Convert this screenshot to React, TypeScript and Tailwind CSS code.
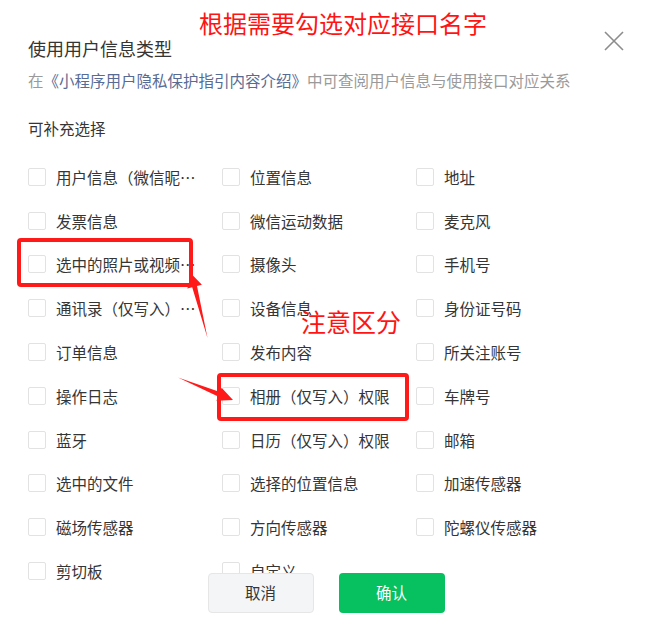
import React from 'react';

const items: string[] = [
  '用户信息（微信昵称、头像）', '位置信息', '地址',
  '发票信息', '微信运动数据', '麦克风',
  '选中的照片或视频信息', '摄像头', '手机号',
  '通讯录（仅写入）权限', '设备信息', '身份证号码',
  '订单信息', '发布内容', '所关注账号',
  '操作日志', '相册（仅写入）权限', '车牌号',
  '蓝牙', '日历（仅写入）权限', '邮箱',
  '选中的文件', '选择的位置信息', '加速传感器',
  '磁场传感器', '方向传感器', '陀螺仪传感器',
  '剪切板', '自定义',
];

const CheckItem: React.FC<{ label: string }> = ({ label }) => (
  <label className="flex h-[43.8px] min-w-0 items-center gap-[10px]">
    <span className="h-[18px] w-[18px] shrink-0 rounded-[2px] border border-[#e2e2e2] bg-white" />
    <span className="max-w-[152px] truncate text-[15.5px] leading-[22px] text-[#353535]">{label}</span>
  </label>
);

export default function App() {
  return (
    <div className="relative h-[634px] w-[652px] overflow-hidden bg-white font-['Noto_Sans_CJK_SC',sans-serif]">
      {/* Dialog body */}
      <div className="pl-[28px] pr-[28px] pt-[31px]">
        <div className="flex items-start justify-between">
          <h1 className="mt-[5px] text-[18px] leading-[25px] text-[#353535]">使用用户信息类型</h1>
          <button className="h-[20px] w-[20px]">
            <svg viewBox="0 0 20 20" className="h-[20px] w-[20px]">
              <path d="M1 1 L19 19 M19 1 L1 19" stroke="#8c8c8c" strokeWidth="1.6" fill="none" />
            </svg>
          </button>
        </div>
        <p className="mt-[8px] text-[15.5px] leading-[22px] text-[#9a9a9a]">
          在<span className="text-[#576b95]">《小程序用户隐私保护指引内容介绍》</span>中可查阅用户信息与使用接口对应关系
        </p>
        <p className="mt-[26px] text-[15.5px] leading-[22px] text-[#353535]">可补充选择</p>

        {/* Options */}
        <div className="mt-[16px] grid grid-cols-[180px_180px_180px] gap-x-[14px]">
          {items.map((it) => (
            <CheckItem key={it} label={it} />
          ))}
        </div>
      </div>

      {/* Footer buttons lie over the list */}
      <div className="absolute left-0 right-0 top-[573px] flex justify-center gap-[25px]">
        <button className="h-[40px] w-[106px] rounded-[4px] border border-[#e6e6e6] bg-[#f4f5f7] text-[15.5px] text-[#353535]">
          取消
        </button>
        <button className="h-[40px] w-[106px] rounded-[4px] bg-[#07c160] text-[15.5px] text-white">
          确认
        </button>
      </div>

      {/* Annotations */}
      <div className="absolute left-[199px] top-[10px] text-[24px] leading-[26px] text-[#ff1414]">根据需要勾选对应接口名字</div>
      <div className="absolute left-[301px] top-[308px] text-[25px] leading-[26px] text-[#ff1414]">注意区分</div>
      <div className="absolute left-[17px] top-[238px] h-[49px] w-[176px] rounded-[4px] border-[4px] border-[#ff1a1a]" />
      <div className="absolute left-[217px] top-[373px] h-[48px] w-[192px] rounded-[4px] border-[4px] border-[#ff1a1a]" />
      <svg className="pointer-events-none absolute left-0 top-0" width="652" height="634">
        <polygon
          points="191.5,274 201.9,284.8 197,286 207.5,338 192.2,287.2 187.3,288.4"
          fill="#ff1a1a"
        />
        <polygon
          points="233,400 216.4,400.8 218.1,396.6 178,377.5 219.9,392 221.6,387.8"
          fill="#ff1a1a"
        />
      </svg>
    </div>
  );
}
